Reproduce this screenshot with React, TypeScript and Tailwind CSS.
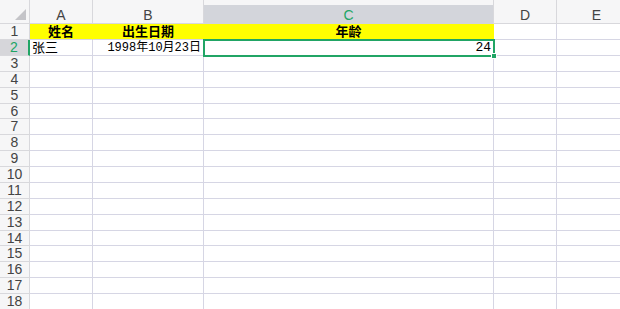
import React from "react";

const cols = [
  { key: "A", w: 63 },
  { key: "B", w: 111 },
  { key: "C", w: 290 },
  { key: "D", w: 63 },
  { key: "E", w: 80 },
];

export default function App() {
  const rows = Array.from({ length: 18 }, (_, i) => i + 1);
  return (
    <div
      className="w-[620px] h-[309px] overflow-hidden bg-white relative"
      style={{ fontFamily: '"Liberation Sans", "Noto Sans CJK SC", sans-serif' }}
    >
      {/* header */}
      <div className="flex h-[24px] bg-[#f6f6f7] border-b border-[#d8d8dc]">
        <div className="w-[30px] shrink-0 h-full border-r border-[#d8d8dc] relative">
          <div className="absolute right-[3px] bottom-[3px] w-0 h-0 border-l-[11px] border-l-transparent border-b-[11px] border-b-[#c4c4c8]" />
        </div>
        {cols.map((c) => (
          <div
            key={c.key}
            className="shrink-0 h-full border-r border-[#d8d8dc] flex flex-col"
            style={{ width: c.w }}
          >
            <div className="h-[5px] shrink-0" />
            <div
              className={
                "flex-1 flex items-center justify-center text-[14px] " +
                (c.key === "C"
                  ? "bg-[#d3d5db] text-[#21a565] border-b-2 border-[#21a565] -mb-[1px]"
                  : "text-[#444]")
              }
            >
              {c.key}
            </div>
          </div>
        ))}
      </div>
      {rows.map((r) => (
        <div key={r} className={"flex " + (r === 6 || r === 14 ? "h-[15px]" : "h-[16px]")}>
          <div
            className={
              "w-[30px] shrink-0 h-full flex items-center justify-center text-[14px] border-b border-[#d8d8dc] " +
              (r === 2
                ? "bg-[#d6d6da] text-[#21a565] border-r-2 border-r-[#21a565]"
                : "bg-[#f6f6f7] text-[#444] border-r border-r-[#d8d8dc]")
            }
          >
            {r}
          </div>
          {cols.map((c) => {
            const yellow = r === 1 && ["A", "B", "C"].includes(c.key);
            let content: React.ReactNode = null;
            let cls = "";
            if (r === 1 && c.key === "A") content = "姓名";
            if (r === 1 && c.key === "B") content = "出生日期";
            if (r === 1 && c.key === "C") content = "年龄";
            if (r === 1) cls = "justify-center font-bold text-[13px] text-black";
            if (r === 2 && c.key === "A") {
              content = "张三";
              cls = "justify-start pl-[2px] text-[13px] text-black";
            }
            if (r === 2 && c.key === "B") {
              content = (
                <span style={{ fontFamily: '"Liberation Mono", "Noto Sans CJK SC", monospace' }}>
                  1998年10月23日
                </span>
              );
              cls = "justify-end pr-[2px] text-[12px] text-black";
            }
            if (r === 2 && c.key === "C") {
              content = (
                <span style={{ fontFamily: '"Liberation Mono", monospace' }}>24</span>
              );
              cls = "justify-end pr-[2px] text-[13px] text-black";
            }
            return (
              <div
                key={c.key}
                className={
                  "shrink-0 h-full flex items-center border-r border-b leading-none whitespace-nowrap overflow-visible " +
                  (yellow
                    ? "bg-[#ffff00] border-r-[#ffff00] border-b-[#d6d6e4] "
                    : "border-[#d6d6e4] ") +
                  cls
                }
                style={{ width: c.w }}
              >
                {content}
              </div>
            );
          })}
        </div>
      ))}
      {/* selection box over C2 */}
      <div className="absolute left-[203px] top-[39px] w-[292px] h-[18px] border-2 border-[#21a565] pointer-events-none" />
      <div className="absolute left-[491px] top-[53px] w-[6px] h-[6px] bg-[#21a565] border border-white" />
    </div>
  );
}
